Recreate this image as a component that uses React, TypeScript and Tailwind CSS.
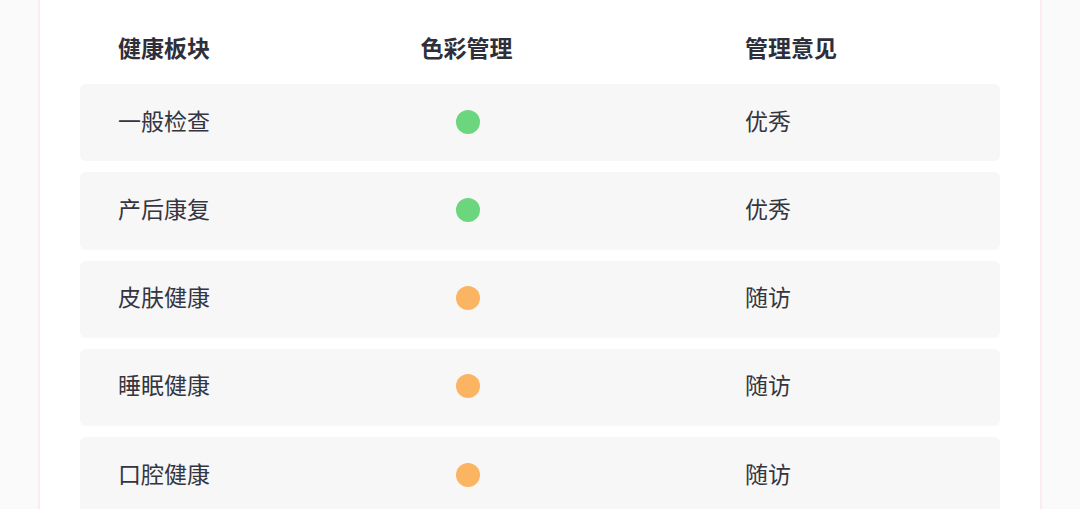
const rows = [
  { name: "一般检查", color: "green", advice: "优秀" },
  { name: "产后康复", color: "green", advice: "优秀" },
  { name: "皮肤健康", color: "orange", advice: "随访" },
  { name: "睡眠健康", color: "orange", advice: "随访" },
  { name: "口腔健康", color: "orange", advice: "随访" },
];

const StatusDot = ({ color }: { color: string }) => (
  <span
    className={
      color === "green"
        ? "block h-6 w-6 rounded-full bg-[#6bd67d]"
        : "block h-6 w-6 rounded-full bg-[#fbb462]"
    }
  />
);

export default function App() {
  return (
    <div className="h-[509px] w-full overflow-hidden bg-[#fafafa] font-['Noto_Sans_CJK_SC',sans-serif]">
      <div className="mx-[38px] h-full border-x-2 border-[#fdecef] bg-white px-[40px] pt-[35px]">
        {/* Header */}
        <div className="grid grid-cols-[250px_200px_1fr] px-[38px] text-[23px] leading-6 font-bold text-[#2f2f3b]">
          <span>健康板块</span>
          <span className="pr-[3px] text-center">色彩管理</span>
          <span className="pl-[177px]">管理意见</span>
        </div>

        {/* Rows */}
        <div className="mt-[25px] flex flex-col gap-[11px]">
          {rows.map((row) => (
            <div
              key={row.name}
              className="grid h-[77.25px] shrink-0 grid-cols-[250px_200px_1fr] items-center rounded-md bg-[#f7f7f7] px-[38px] text-[23px] leading-6 text-[#35353f]"
            >
              <span className="pb-[6px]">{row.name}</span>
              <span className="flex justify-center pb-[2px]">
                <StatusDot color={row.color} />
              </span>
              <span className="pb-[6px] pl-[177px]">{row.advice}</span>
            </div>
          ))}
        </div>
      </div>
    </div>
  );
}
